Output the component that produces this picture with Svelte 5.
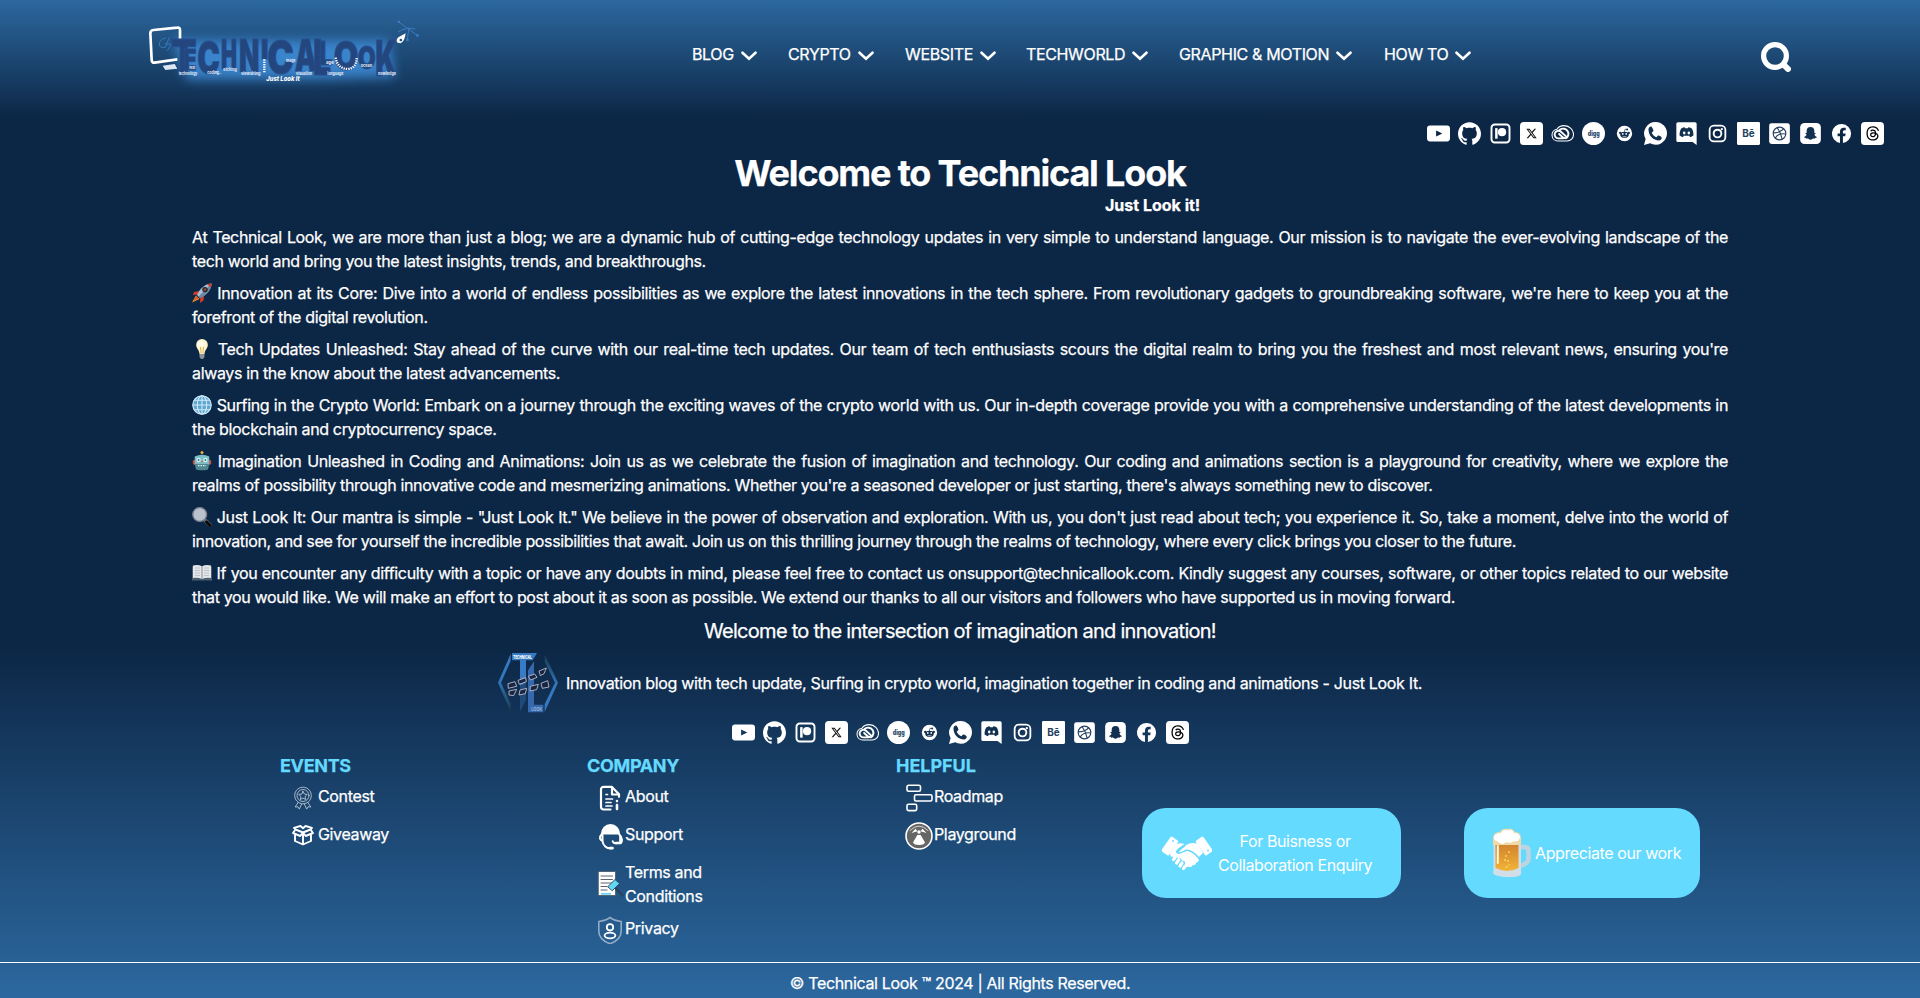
<script>
  const nav = ['BLOG', 'CRYPTO', 'WEBSITE', 'TECHWORLD', 'GRAPHIC & MOTION', 'HOW TO'];
  const socials = ['youtube', 'github', 'patreon', 'x', 'cc', 'digg', 'reddit', 'whatsapp', 'discord', 'instagram', 'behance', 'dribbble', 'snapchat', 'facebook', 'threads'];
  const paragraphs = [
    { text: 'At Technical Look, we are more than just a blog; we are a dynamic hub of cutting-edge technology updates in very simple to understand language. Our mission is to navigate the ever-evolving landscape of the tech\u00a0world and bring you the latest insights, trends, and breakthroughs.' },
    { icon: 'rocket', text: "Innovation at its Core: Dive into a world of endless possibilities as we explore the latest innovations in the tech sphere. From revolutionary gadgets to groundbreaking software, we're here to keep you at the forefront of the digital revolution." },
    { icon: 'bulb', text: "Tech Updates Unleashed: Stay ahead of the curve with our real-time tech updates. Our team of tech enthusiasts scours the digital realm to bring you the freshest and most relevant news, ensuring you're always in the know about the latest advancements." },
    { icon: 'globe', text: 'Surfing in the Crypto World: Embark on a journey through the exciting waves of the crypto world with us. Our in-depth coverage provide you with a comprehensive understanding of the latest developments in the blockchain and cryptocurrency space.' },
    { icon: 'robot', text: "Imagination Unleashed in Coding and Animations: Join us as we celebrate the fusion of imagination and technology. Our coding and animations section is a playground for creativity, where we explore the realms of possibility through innovative code and mesmerizing animations. Whether you're a seasoned developer or just starting, there's always something new to discover." },
    { icon: 'lens', text: 'Just Look It: Our mantra is simple - "Just Look It." We believe in the power of observation and exploration. With us, you don\'t just read about tech; you experience it. So, take a moment, delve into the world of innovation, and see for yourself the incredible possibilities that await. Join us on this thrilling journey through the realms of technology, where every click brings you closer to the future.' },
    { icon: 'book', text: 'If you encounter any difficulty with a topic or have any doubts in mind, please feel free to contact us onsupport@technicallook.com. Kindly suggest any courses, software, or other topics related to our website that you would like. We will make an effort to post about it as soon as possible. We extend our thanks to all our visitors and followers who have supported us in moving forward.' }
  ];
  const columns = [
    { title: 'EVENTS', links: [['contest', 'Contest'], ['gift', 'Giveaway']] },
    { title: 'COMPANY', links: [['about', 'About'], ['support', 'Support'], ['terms', 'Terms and Conditions'], ['privacy', 'Privacy']] },
    { title: 'HELPFUL', links: [['roadmap', 'Roadmap'], ['playground', 'Playground']] }
  ];
  /* letter, x, baseline, font size, drawn width */
  const letters = [
    ['T', 122, 196, 148, 78], ['E', 160, 180, 86, 40], ['C', 202, 192, 136, 68], ['H', 273, 178, 122, 48],
    ['N', 327, 187, 136, 61], ['I', 393, 148, 80, 22], ['C', 412, 192, 140, 80], ['A', 494, 184, 132, 66],
    ['L', 549, 196, 148, 54], ['L', 568, 164, 100, 40], ['O', 611, 181, 120, 74], ['O', 683, 178, 96, 54], ['K', 736, 197, 148, 64]
  ];
  const tags = [['technology', 146, 195, 56], ['coding..', 232, 193, 42], ['etching', 280, 182, 40], ['viewshing', 333, 195, 58], ['visualize', 498, 195, 48], ['language', 592, 196, 48], ['nowledge', 744, 195, 54], ['nest', 178, 178, 18], ['image', 468, 156, 28], ['age', 588, 162, 24], ['ocean', 692, 172, 34]];
</script>

{#snippet social(name)}
  <svg class="social" viewBox="0 0 24 24" fill="#fff">
    {#if name === 'youtube'}
      <path fill-rule="evenodd" d="M3.5 3.7h17A3.3 3.3 0 0 1 24 7v10a3.3 3.3 0 0 1-3.5 3.3h-17A3.3 3.3 0 0 1 0 17V7a3.3 3.3 0 0 1 3.5-3.3ZM9.5 8.800v6.400L16 12Z" />
    {:else if name === 'github'}
      <path d="M12 .297c-6.63 0-12 5.373-12 12 0 5.303 3.438 9.8 8.205 11.385.6.113.82-.258.82-.577 0-.285-.01-1.04-.015-2.04-3.338.724-4.042-1.61-4.042-1.61C4.422 18.07 3.633 17.7 3.633 17.7c-1.087-.744.084-.729.084-.729 1.205.084 1.838 1.236 1.838 1.236 1.07 1.835 2.809 1.305 3.495.998.108-.776.417-1.305.76-1.605-2.665-.3-5.466-1.332-5.466-5.93 0-1.31.465-2.38 1.235-3.22-.135-.303-.54-1.523.105-3.176 0 0 1.005-.322 3.3 1.23.96-.267 1.98-.399 3-.405 1.02.006 2.04.138 3 .405 2.28-1.552 3.285-1.23 3.285-1.23.645 1.653.24 2.873.12 3.176.765.84 1.23 1.91 1.23 3.22 0 4.61-2.805 5.625-5.475 5.92.42.36.81 1.096.81 2.22 0 1.606-.015 2.896-.015 3.286 0 .315.21.69.825.57C20.565 22.092 24 17.592 24 12.297c0-6.627-5.373-12-12-12" />
    {:else if name === 'patreon'}
      <rect x="2.6" y="2.6" width="18.8" height="18.8" rx="3.4" fill="none" stroke="#fff" stroke-width="2" />
      <rect x="6.4" y="6.4" width="2.6" height="11" /><circle cx="13.6" cy="10.6" r="4.3" />
    {:else if name === 'x'}
      <rect width="24" height="24" rx="4" />
      <path fill="#111" transform="translate(6 6) scale(.5)" d="M18.244 2.25h3.308l-7.227 8.26 8.502 11.24H16.17l-5.214-6.817L4.99 21.75H1.68l7.73-8.835L1.254 2.25H8.08l4.713 6.231zm-1.161 17.52h1.833L7.084 4.126H5.117z" />
    {:else if name === 'cc'}
      <g fill="none" stroke="#fff">
        <path stroke-width="1.1" d="M7 19.8A6.2 6.2 0 0 1 6.2 7.5C8 5 10.6 3.7 13.8 3.8c5.5.3 9.7 4 9.7 9 0 4-3 7-6.7 7Z" />
        <path stroke-width="2" stroke-linecap="round" d="M12.500 17.100H7.800a4 4 0 1 1 2.600-7l5 4.600M9.300 8.200a5.400 5.400 0 1 1 6.200 8.800c-1.500 0-2.800-.5-3.800-1.500L8.500 12.500" />
      </g>
    {:else if name === 'digg'}
      <circle cx="12" cy="12" r="12" />
      <text x="6" y="14.300" textLength="12.500" lengthAdjust="spacingAndGlyphs" font-size="7.500" font-weight="900" fill="#33506f">digg</text>
    {:else if name === 'reddit'}
      <circle cx="12" cy="12" r="8" />
      <g fill="#123050"><ellipse cx="12" cy="13.300" rx="4.500" ry="3.200" /><circle cx="7.500" cy="11.500" r="1.200" /><circle cx="16.500" cy="11.500" r="1.200" /><circle cx="14.800" cy="7.800" r="1" /><path d="M11.700 10.500 12.400 7l2.400.500v.500l-2-.300-.500 2.800Z" /></g>
      <g fill="#fff"><circle cx="10.200" cy="12.500" r=".9" /><circle cx="13.800" cy="12.500" r=".9" /><path d="M10 14.600q2 1.300 4 0v.500q-2 1.200-4 0Z" /></g>
    {:else if name === 'whatsapp'}
      <path d="M12.100 0A11.900 11.900 0 0 1 24 11.900 11.900 11.900 0 0 1 6.400 22.300L0 24l1.700-6.200A11.900 11.900 0 0 1 12.100 0Z" />
      <path fill="#123050" transform="translate(3.200 3.300) scale(.73)" d="M6.620 10.790c1.440 2.830 3.760 5.140 6.590 6.590l2.200-2.200c.27-.27.67-.36 1.020-.24 1.120.37 4.570 1.570 4.570 3.570 0 1.500-1.450 3.490-4 3.490C9 22 2 15.390 2 6c0-2 2-4 3.500-4s2.500 2.450 3.570 5.570c.11.35.03.74-.25 1.020l-2.200 2.200z" />
    {:else if name === 'discord'}
      <path d="M3 .2h18A1.600 1.600 0 0 1 22.600 1.800V24l-4.300-3.200H3A1.600 1.600 0 0 1 1.400 19.200V1.800A1.600 1.600 0 0 1 3 .2Z" />
      <path fill="#123050" d="M8.500 5.800 10 5.600l.6 1h2.800l.6-1 1.500.2 2 1c1.300 2.200 1.900 4.500 1.700 7.300-1 .9-2.200 1.400-3.500 1.700l-.8-1.400h-5.800l-.8 1.400a8 8 0 0 1-3.500-1.700c-.2-2.800.4-5.100 1.700-7.300Z" />
      <ellipse cx="9.600" cy="11.500" rx="1.300" ry="1.500" /><ellipse cx="14.400" cy="11.500" rx="1.300" ry="1.500" />
    {:else if name === 'instagram'}
      <rect x="3.800" y="3.800" width="16.400" height="16.400" rx="4.400" fill="none" stroke="#fff" stroke-width="1.900" />
      <circle cx="12" cy="12" r="4" fill="none" stroke="#fff" stroke-width="2" /><circle cx="16.500" cy="7.500" r="1.200" />
    {:else if name === 'behance'}
      <rect width="24" height="24" rx="1.200" />
      <text x="5.400" y="16" textLength="13" lengthAdjust="spacingAndGlyphs" font-size="10.500" font-weight="700" fill="#24405f">Bē</text>
    {:else if name === 'dribbble'}
      <rect x="1.200" y="1.300" width="21.600" height="21.600" rx="2.600" />
      <g fill="none" stroke="#24405f" stroke-width="1.200"><circle cx="12" cy="12" r="6.600" /><path d="M9.500 6q4 5 5.300 12M5.500 11.300q7 .3 11-4.300M7.500 16.800q3.200-5.600 11-4.300" /></g>
    {:else if name === 'snapchat'}
      <rect x="1.200" y="1" width="21.600" height="22" rx="4.600" />
      <path fill="#123050" d="M12 5.300c2.600 0 4 1.800 4 3.900v2.200c.5.100 1.300-.1 1.400.4.100.6-1 .8-1.300 1.300.3 1.300 1.300 2.200 2.500 2.500.1.700-.9.900-1.700 1-.2.400-.2.800-.6.800-.7 0-1.600-.3-2.300.3-1.200 1-2.800 1-4 0-.7-.6-1.600-.3-2.300-.3-.4 0-.4-.4-.6-.8-.8-.1-1.800-.3-1.700-1 1.200-.3 2.200-1.200 2.500-2.500-.3-.5-1.400-.7-1.300-1.300.1-.5.900-.3 1.400-.4V9.200c0-2.100 1.400-3.900 4-3.900Z" />
    {:else if name === 'facebook'}
      <path d="M22 12a10 10 0 1 0-11.600 9.900v-7H7.900V12h2.500V9.800c0-2.500 1.500-3.900 3.800-3.900 1.100 0 2.200.2 2.200.2v2.500h-1.300c-1.200 0-1.600.8-1.600 1.600V12h2.800l-.4 2.900h-2.400v7A10 10 0 0 0 22 12Z" />
    {:else}
      <rect width="24" height="24" rx="4" />
      <path fill="#000" transform="translate(4.800 4.400) scale(.625)" d="M12.186 24h-.007c-3.581-.024-6.334-1.205-8.184-3.509C2.350 18.440 1.500 15.586 1.472 12.010v-.017c.03-3.579.879-6.430 2.525-8.482C5.845 1.205 8.600.024 12.180 0h.014c2.746.02 5.043.725 6.826 2.098 1.677 1.290 2.858 3.130 3.509 5.467l-2.040.569c-1.104-3.960-3.898-5.984-8.304-6.015-2.910.022-5.110.936-6.540 2.717C4.307 6.504 3.616 8.914 3.589 12c.027 3.086.718 5.496 2.057 7.164 1.430 1.783 3.631 2.698 6.540 2.717 2.623-.02 4.358-.631 5.800-2.045 1.647-1.613 1.618-3.593 1.090-4.798-.31-.71-.873-1.300-1.634-1.750-.192 1.352-.622 2.446-1.284 3.272-.886 1.102-2.140 1.704-3.730 1.790-1.202.065-2.361-.218-3.259-.801-1.063-.689-1.685-1.740-1.752-2.964-.065-1.190.408-2.285 1.330-3.082.88-.76 2.119-1.207 3.583-1.291a13.853 13.853 0 0 1 3.020.142c-.126-.742-.375-1.332-.75-1.757-.513-.586-1.308-.883-2.359-.89h-.029c-.844 0-1.992.232-2.721 1.320L7.734 7.847c.98-1.454 2.568-2.256 4.478-2.256h.044c3.194.02 5.097 1.975 5.287 5.388.108.046.216.094.321.142 1.490.7 2.580 1.761 3.154 3.070.797 1.820.871 4.790-1.548 7.158-1.850 1.810-4.094 2.628-7.277 2.650Zm1.003-11.690c-.242 0-.487.007-.739.021-1.836.103-2.980.946-2.916 2.143.067 1.256 1.452 1.839 2.784 1.767 1.224-.065 2.818-.543 3.086-3.710a10.500 10.500 0 0 0-2.215-.221z" />
    {/if}
  </svg>
{/snippet}

{#snippet emoji(name)}
  <svg class="emoji" viewBox="0 0 20 20">
    {#if name === 'rocket'}
      <path fill="#d63b28" d="m7 8-5 1-1 3 5-.5ZM12 13l-.5 4.500L8 20l.3-5Z" />
      <path fill="#f6a020" d="M4 12.500 0 19.500 7.500 16Z" /><path fill="#e8472c" d="M4.500 13 1.500 18 6.500 15.500Z" />
      <path fill="#a9bfd4" d="M19.500.5C14 .5 8 5 5 12l3 3C15 12 19.500 6 19.500.5Z" /><path fill="#6d86a3" d="M19.500.5C19.500 6 15 12 8 15l-1.400-1.400Z" />
      <path fill="#d63b28" d="M19.500.5 15 1.200l4 3.600Z" /><circle cx="13" cy="6.600" r="2.700" fill="#222" /><circle cx="13" cy="6.600" r="1.500" fill="#7b4b45" />
    {:else if name === 'bulb'}
      <path fill="#fff6c9" d="M10 0a5.800 5.800 0 0 1 5.800 6c0 3.500-3 4.500-3.300 9h-5C7.200 10.500 4.200 9.500 4.200 6A5.800 5.800 0 0 1 10 0Z" /><circle cx="9" cy="5" r="3" fill="#fffdf0" /><path fill="none" stroke="#dba63e" stroke-width=".8" d="m8.500 8 .6 6.500M11.500 8l-.6 6.500" /><path fill="#8d9296" d="M7.500 15h5v3L11 20H9l-1.500-2Z" />
    {:else if name === 'globe'}
      <circle cx="10" cy="10" r="9.600" fill="#5fa6cf" /><g fill="none" stroke="#cfeafa" stroke-width="1.100"><circle cx="10" cy="10" r="9.200" /><ellipse cx="10" cy="10" rx="4.700" ry="9.200" /><path d="M10 1v18M1 10h18M2.500 5.300h15M2.500 14.700h15" /></g>
    {:else if name === 'robot'}
      <circle cx="10" cy="1.500" r="1.500" fill="#f3ae32" /><path fill="#718" d="M9.500 3h1v2h-1z" /><rect x=".8" y="9" width="3" height="4.500" rx="1" fill="#c74b3b" /><rect x="16.200" y="9" width="3" height="4.500" rx="1" fill="#c74b3b" /><path fill="#7cbec5" d="M2.700 5.500q7.300-3.500 14.600 0V14q-7 4-14.600 0Z" /><path fill="#4d8790" d="M2.700 13h14.600l-1.300 5.500q-6 1.700-12 0Z" /><circle cx="6.600" cy="9" r="2.200" fill="#d7f1f5" /><circle cx="13.400" cy="9" r="2.200" fill="#d7f1f5" /><circle cx="6.600" cy="9" r=".9" fill="#277" /><circle cx="13.400" cy="9" r=".9" fill="#277" /><path fill="#d76653" d="m10 9 1.200 2.300H8.800Z" /><path stroke="#d9f5f7" stroke-width="1.400" stroke-dasharray="1.500 1" d="M6 14.600h8" />
    {:else if name === 'lens'}
      <path stroke="#5a616c" stroke-width="4" stroke-linecap="round" d="m13.300 13.500 4.500 4.400" /><path stroke="#0b0b0d" stroke-width="3" stroke-linecap="round" d="m14.600 15 3.400 3.300" /><circle cx="7.700" cy="7.500" r="6.900" fill="#b9c1cc" stroke="#777f8a" stroke-width="1.400" />
    {:else}
      <path fill="#4a6070" d="M0 3.500h20v14H0Z" /><path fill="#e4e6ea" d="M1 2.500q5-1.300 9 .8 4-2.100 9-.8V15q-5-.8-9 1-4-1.800-9-1Z" /><path stroke="#b3b8c0" stroke-width=".8" fill="none" d="M3 5h5M3 7.500h5M3 10h5M3 12.500h5M12 5h5M12 7.500h5M12 10h5M12 12.500h5" /><path stroke="#878c95" stroke-width="1" d="M10 3v13" />
    {/if}
  </svg>
{/snippet}

{#snippet linkIcon(name)}
  <svg class="link-icon" viewBox="0 0 28 28" fill="none" stroke="#fff" stroke-linecap="round" stroke-linejoin="round">
    {#if name === 'contest'}
      <g stroke="#b8c6d4" stroke-width=".9"><circle cx="14" cy="11.500" r="8.300" stroke-dasharray="3 .7" /><circle cx="14" cy="11.500" r="6" /><path d="m14 7.300 1.300 2.700 3 .4-2.200 2.100.5 3-2.600-1.400-2.600 1.400.5-3-2.200-2.100 3-.4ZM9.300 18.300 6.200 23l2.800-.2 1.300 2.300 2.400-5.200M18.700 18.300l3.100 4.700-2.800-.2-1.300 2.300-2.400-5.200" /></g>
    {:else if name === 'gift'}
      <g stroke-width="1.900"><path d="M14 10.500 6.500 7.500 4 11l7.300 3ZM14 10.500l7.500-3L24 11l-7.300 3ZM6 13.500V19l8 3.500 8-3.500v-5.500M14 11v11M6.500 7.500 5 5.800 11.500 4 14 6.200 16.500 4 23 5.800l-1.500 1.700" /></g>
    {:else if name === 'about'}
      <g stroke-width="2.200"><path d="M14.500 25.500H7.700A2.700 2.700 0 0 1 5 22.800V5.500a2.700 2.700 0 0 1 2.700-2.700h8l7.300 7.500v2.500" /><path d="M16 3.500v7h7" /></g><path stroke-width="1.700" d="M10 10.500h1.500M10 15h6.500M10 18.500h5M10 22h6" /><path stroke-width="2.600" d="M21 21v4M21 17v.1" />
    {:else if name === 'support'}
      <path fill="#fff" stroke="none" d="M4.800 12.500a9.700 10.500 0 0 1 19.400 0Z" /><path stroke-width="2" d="M5.500 12.500C2.500 15.500 4 18 6.500 19M6.500 13v6a8 8 0 0 0 8.500 7.300M23.300 12.500c3 3 3.500 7.500 1.200 8.500l-5.500.2c-1.500-.1-2-.9-2.300-1.900" /><path stroke-width="2.700" d="M14 26.200h2.500M20 21h4.500M24.500 15v5" />
    {:else if name === 'terms'}
      <path fill="#fff" stroke="#465463" stroke-width=".8" d="M2.500 2.500h17v24h-17Z" /><path stroke="#5b6470" stroke-width="1" d="M5 7h11.500M5 10.500h11.500M5 14h11.500M5 17.500h6M5 21h6" /><path fill="#62d6f2" stroke="none" d="M5 24h10v1.700H5Z" /><path stroke="#25445c" stroke-width="2.400" d="m18.500 18 8 8.500" /><path fill="#62d6f2" stroke="#2d5166" stroke-width="1" d="m12 17.500 7-7 4.500 4-7 7Z" />
    {:else if name === 'privacy'}
      <path stroke="#91abc5" stroke-width="1.600" d="M14 1.500C10 4.500 7 5 2.800 5.500V15c0 6 4.500 10.300 11.200 12.800C20.700 25.300 25.200 21 25.200 15V5.500C21 5 18 4.500 14 1.500Z" /><circle cx="14" cy="11.300" r="3.200" stroke-width="1.800" /><ellipse cx="14" cy="19.500" rx="5.400" ry="2.800" stroke-width="1.800" />
    {:else if name === 'roadmap'}
      <g stroke-width="1.600"><rect x="2" y="1.300" width="13.500" height="6" rx="1.700" /><rect x="9.500" y="10.700" width="17.500" height="6.300" rx="1.500" /><rect x="2" y="20.300" width="9.700" height="6.300" rx="1.500" /></g>
    {:else}
      <circle cx="14" cy="14" r="13" fill="#666" stroke-width="1.600" /><path stroke-width=".7" d="M5 8.500q9-9 18 0" /><circle cx="14" cy="10" r="1.700" fill="#fff" stroke="none" /><path fill="#fff" stroke="none" d="M12.300 13h3.400l4.300 7.500q-1 2.500-6 2.500t-6-2.500ZM6.500 11 10.500 6.800l2 2.400ZM21.500 11l-4-4.200-2 2.400Z" />
    {/if}
  </svg>
{/snippet}

<div class="page">
  <header>
    <svg class="brand" viewBox="0 0 900 270">
      <defs><filter id="glow" x="-20%" y="-60%" width="140%" height="220%"><feGaussianBlur stdDeviation="18" /></filter></defs>
      <path filter="url(#glow)" fill="#3f8fdc" opacity=".85" d="M130 90H775L795 200 560 208H170Z" />
      <path fill="none" stroke="#fff" stroke-width="8" stroke-linejoin="round" d="M142 148 74 158Q66 159 65 150L61 70Q61 61 70 60L142 53Q150 52 150 60V88" />
      <path fill="#dbe7f3" d="m98 167 36-5 8 14-36 4Z" />
      <path fill="none" stroke="#3777b8" stroke-width="3" d="M108 84q-20 4-20 18t18 10l12-30M104 102h20l-12 20" />
      {#each letters as [ch, x, y, size, width]}
        <text {x} {y} font-size={size} textLength={width} lengthAdjust="spacingAndGlyphs" class="mark">{ch}</text>
      {/each}
      {#each tags as [word, x, y, width]}
        <text {x} {y} font-size="13" textLength={width} lengthAdjust="spacingAndGlyphs" class="tag">{word}</text>
      {/each}
      <path fill="none" stroke="#fff" stroke-width="7" stroke-dasharray="4 3" d="M617 143q5 33 37 34 25-3 26-33M403 148v42" />
      <text x="409" y="213" font-size="20" textLength="100" lengthAdjust="spacingAndGlyphs" class="slogan">Just Look It</text>
      <path fill="#fff" fill-rule="evenodd" d="m827 70-22 12q-9 10-2 16l8 2q13-4 16-30Zm-15 16a4 4 0 1 0 1 0Z" />
      <path stroke="#3b7cc0" stroke-width="3" fill="none" d="m806 36 56 40M804 66q24-15 52-9M832 88l5-36" /><path fill="#3b7cc0" d="M803 32h7v7h-7ZM859 73h7v7h-7ZM829 86h7v7h-7Z" />
    </svg>
    <nav>
      {#each nav as item}
        <a href="#top">{item}<svg viewBox="0 0 16 10"><path d="m1.500 1.700 6.500 6 6.500-6" fill="none" stroke="#fff" stroke-width="2.600" stroke-linecap="round" stroke-linejoin="miter" /></svg></a>
      {/each}
    </nav>
    <svg class="search" viewBox="0 0 30 30" fill="none" stroke="#fff"><circle cx="14" cy="14" r="11.400" stroke-width="5.200" /><path d="m22.500 22.500 4.500 4.500" stroke-width="6" stroke-linecap="round" /></svg>
  </header>

  <div class="socials top">{#each socials as s}{@render social(s)}{/each}</div>

  <main>
    <h1>Welcome to Technical Look</h1>
    <strong class="slogan-line">Just Look it!</strong>
    <div class="copy">
      {#each paragraphs as p}
        <p>{#if p.icon}{@render emoji(p.icon)}{' '}{/if}{p.text}</p>
      {/each}
    </div>
    <h2>Welcome to the intersection of imagination and innovation!</h2>
  </main>

  <footer>
    <div class="tagline">
      <svg class="badge" viewBox="0 0 180 180">
        <defs>
          <linearGradient id="fadeDown" x2="0" y2="1"><stop offset=".45" stop-color="#3478bf" /><stop offset="1" stop-color="#163b49" /></linearGradient>
          <linearGradient id="fadeUp" x2="0" y2="1"><stop stop-color="#163b49" /><stop offset=".55" stop-color="#3478bf" /></linearGradient>
        </defs>
        <path fill="url(#fadeDown)" d="M38 2v22L9 89l29 64v23L0 89Z" /><path fill="url(#fadeUp)" d="M140 4v22l31 63-31 65v23l40-88Z" />
        <path fill="#3478bf" d="M42 0h75l-13 22H42Z" /><path fill="#397ac4" d="M66 20h18v70l-18 8Z" /><path fill="#285890" d="M66 98v78l18-36V85Z" opacity=".65" />
        <path fill="#3568ad" d="M90 52 108 25v130h28v23H90Z" />
        <g fill="#182543" stroke="#c9c5d0" stroke-width="2.500"><path d="m30 92 21-6 5 14-25 6ZM60 82l23-8 2 12-21 8ZM91 70l19-7 7 10-19 8ZM123 54l22-9-7 17-11 6ZM33 114l23-5-9 19-14-2ZM66 111l20-5-4 16-19 4ZM97 100l24-6-5 16-20 4ZM129 91l20-8 4 19-20 4Z" /></g>
        <text x="45" y="17" font-size="15" font-weight="800" textLength="56" lengthAdjust="spacingAndGlyphs" fill="#fff">TECHNICAL</text>
        <text x="100" y="174" font-size="14" font-weight="700" textLength="32" lengthAdjust="spacingAndGlyphs" fill="#9bb6d8">LOOK</text>
      </svg>
      <span>Innovation blog with tech update, Surfing in crypto world, imagination together in coding and animations - Just Look It.</span>
    </div>
    <div class="socials">{#each socials as s}{@render social(s)}{/each}</div>
    <div class="links">
      {#each columns as col}
        <section>
          <h3>{col.title}</h3>
          <ul>
            {#each col.links as [icon, label]}
              <li>{@render linkIcon(icon)}<a href="#top">{label}</a></li>
            {/each}
          </ul>
        </section>
      {/each}
      <button class="business">
        <svg width="50" height="36" viewBox="0 0 50 36">
          <g fill="#fff"><rect x="-4.500" y="-9" width="9" height="18" rx="1.200" transform="translate(7.800 11) rotate(35)" /><rect x="-4.500" y="-9" width="9" height="18" rx="1.200" transform="translate(42.200 11) rotate(-35)" />
            <path d="M14.500 9q4-1.500 8 0l-7 5c-3 3-1 5.500 2.500 4.500 3-1 5-2.500 7.500-2.500 5 1 9 5 11 8 1 3-2 3.500-2.500 3.500 0 2.500-2 3-3.500 2.500-.5 2.500-3 2.500-4.500 1.500-1.500 1.500-3 1-4.500.5l1.500-3c1-3-2-4-3-3 0-3-3-3.500-4-2 0-2.500-3-3.500-4.500-1.500-1-1.500-2.500-1-3-1L8 18Z" />
            <path d="M24 10q6-3.500 12-1l5 9-4 4q-7-8-13-7.500-4 3-7.500 2.800Z" /></g>
          <g stroke="#fff" stroke-width="3.200" stroke-linecap="round"><path d="m11.500 24.500 1.700-2M14.500 28l2.300-3.200M18 31l2-3M21.500 33.500l1-1.600" /></g>
          <path d="M23.500 10.500 16 15.500c-2 2-.500 3.200 2 2.500 3-1 5-2.800 7.500-2.600 4.500.600 8 3.600 10.500 7.100" fill="none" stroke="#64dafe" stroke-width="1" />
          <circle cx="11" cy="6" r=".9" fill="#64dafe" /><circle cx="46" cy="15.500" r=".9" fill="#64dafe" />
        </svg>
        <span>For Buisness or<br />Collaboration Enquiry</span>
      </button>
      <button class="appreciate">
        <svg width="38" height="50" viewBox="0 0 38 50">
          <defs><linearGradient id="beer" x2="0" y2="1"><stop stop-color="#ce7f2e" /><stop offset="1" stop-color="#f2b437" /></linearGradient></defs>
          <path fill="none" stroke="#bed3e0" stroke-width="4.600" d="M27 19h4.500q4 0 4 4v8q0 4.500-9 7" />
          <path fill="#d1dee7" d="M.5 13h27.500v30q1 3-2 5Q14 51 2 47q-3-2-1.500-5Z" />
          <path fill="url(#beer)" d="M2.500 14h23v26q-11 6-23 0Z" />
          <path fill="#f0d9a8" d="M0 9Q1 4 7 4q2-4 8-3 4-2 7 3 6 0 6 6v7H0Z" /><path fill="#fff" d="M1 9q1-4 7-4 2-4 7-3 4-1 6 3 6 0 6 5l-2 3q-5 0-8 2-4-2-7 1-3 0-6-3-3 0-3-4Z" />
          <path stroke="#fff7de" stroke-width="2" stroke-linecap="round" d="M4.800 18v17" /><g fill="#f6db62"><circle cx="16" cy="24" r=".9" /><circle cx="13" cy="28" r=".9" /><circle cx="12" cy="32" r="1" /><circle cx="15" cy="33" r=".9" /><circle cx="16" cy="37" r=".8" /><circle cx="13.500" cy="39" r=".9" /></g>
        </svg>
        <span>Appreciate our work</span>
      </button>
    </div>
    <div class="legal">© Technical Look ™ 2024 | All Rights Reserved.</div>
  </footer>
</div>

<style>
  :global(body) { margin: 0; background: #0c2645; }
  .page { width: 1920px; height: 998px; overflow: hidden; color: #fff; font: 400 16px/24px Inter, sans-serif; letter-spacing: -0.35px; -webkit-text-stroke: 0.25px currentColor; display: flex; flex-direction: column; }
  svg { -webkit-text-stroke: 0; }
  a { color: inherit; text-decoration: none; }
  header { height: 118px; flex: none; box-sizing: border-box; padding: 10px 129px 0 130px; display: grid; grid-template-columns: 300px 1fr auto; background: linear-gradient(#2c689f, #0c2645); }
  .brand { width: 300px; height: 90px; letter-spacing: 0; }
  .mark { font-weight: 900; fill: #23467f; stroke: #26508f; stroke-width: 3px; }
  .tag { font-weight: 700; fill: #e3edf8; }
  .slogan { font-weight: 800; font-style: italic; fill: #fff; }
  nav { display: grid; grid-template-columns: 96px 117px 121px 153px 205px 90px; margin-left: 262px; padding-top: 32px; align-content: start; }
  nav a { display: flex; gap: 7px; white-space: nowrap; }
  nav svg { width: 16px; height: 10px; margin-top: 9px; flex: none; }
  .search { width: 30px; height: 30px; margin-top: 32px; }
  .socials { display: flex; gap: 8px; justify-content: center; height: 24px; }
  .socials.top { justify-content: flex-end; padding: 4px 36px 0 0; flex: none; }
  .social { width: 23px; height: 23px; letter-spacing: 0; }
  main { width: 1536px; margin: 0 auto; display: flex; flex-direction: column; align-items: center; flex: none; height: 498px; }
  h1 { margin: 5px 0 0; font-size: 36px; line-height: 44px; font-weight: 700; letter-spacing: -1.17px; }
  .slogan-line { font-weight: 700; letter-spacing: 0; align-self: flex-start; margin: -2px 0 0 913px; height: 24px; }
  .copy { padding-top: 8px; }
  p { margin: 0 0 8px; text-align: justify; }
  .emoji { width: 20px; height: 20px; vertical-align: -4px; }
  h2 { margin: 0; font-size: 20px; line-height: 28px; font-weight: 400; letter-spacing: -0.72px; }
  footer { flex: 1; background: linear-gradient(#0c2645, #2c689f); display: flex; flex-direction: column; }
  .tagline { display: flex; align-items: center; gap: 8px; justify-content: center; height: 60px; margin-top: 9px; letter-spacing: -0.33px; }
  .badge { width: 60px; height: 60px; }
  footer > .socials { margin-top: 8px; padding-left: 1px; }
  .links { display: grid; grid-template-columns: 307px 309px 246px 322px 236px; padding-left: 280px; margin-top: 7px; flex: 1; }
  h3 { margin: 0; font-size: 18px; line-height: 28px; font-weight: 700; color: #64dafe; letter-spacing: -0.35px; }
  section:nth-of-type(3) h3 { letter-spacing: -0.05px; }
  ul { list-style: none; margin: 4px 0 0; padding: 0 0 0 9px; }
  li { display: flex; align-items: center; gap: 1px; min-height: 30px; margin-bottom: 8px; width: 120px; }
  li a { line-height: 24px; align-self: flex-start; }
  .link-icon { width: 28px; height: 28px; flex: none; margin-bottom: 2px; }
  button { font: inherit; letter-spacing: -0.4px; -webkit-text-stroke: 0; color: #fff; background: #64dafe; border: 0; border-radius: 24px; height: 90px; margin: 56px 0 0; padding: 0; display: flex; align-items: center; box-sizing: border-box; white-space: nowrap; }
  .business { width: 259px; padding-left: 20px; gap: 6px; }
  .appreciate { width: 236px; padding-left: 29px; gap: 4px; }
  .legal { border-top: 1px solid #fff; height: 36px; box-sizing: border-box; text-align: center; padding-top: 8px; }
</style>
